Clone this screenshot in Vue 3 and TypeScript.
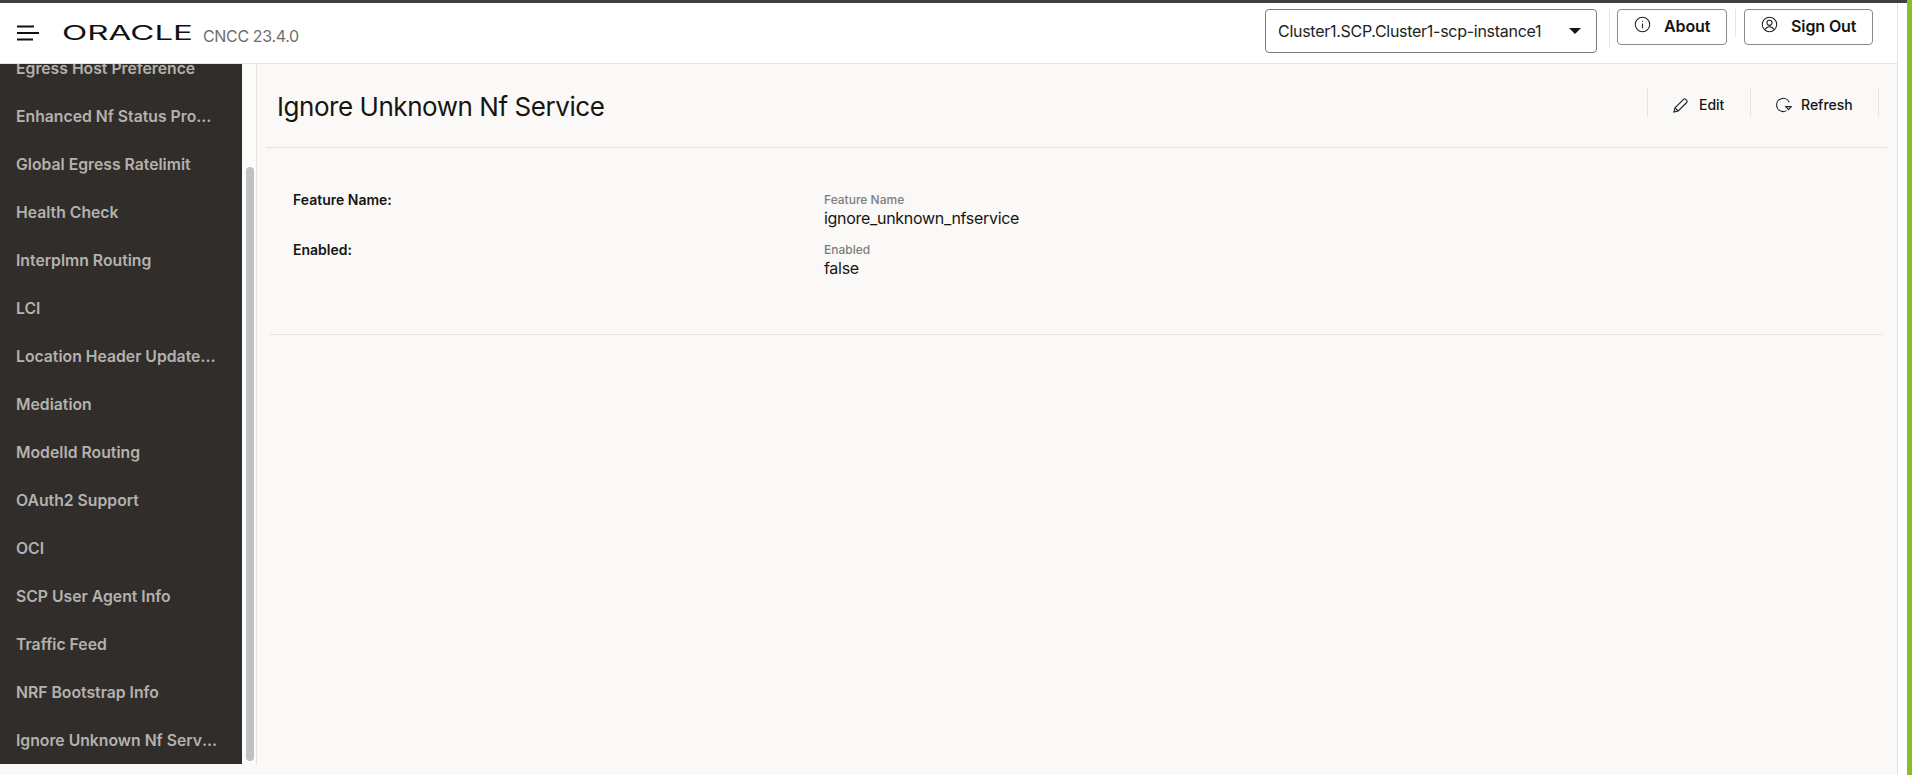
<template>
  <div class="screen">
    <div class="left-col">
      <div class="top-strip"></div>
      <div class="frame">
        <div class="app">
          <header class="app-header">
            <svg class="menu-icon" width="22" height="16" viewBox="0 0 22 16">
              <path d="M0 1.5h17M0 8h22M0 14.5h16" fill="none" stroke="#111" stroke-width="2" />
            </svg>
            <svg class="logo" width="132" height="24" viewBox="0 0 132 24">
              <text x="0" y="19" textLength="131" lengthAdjust="spacingAndGlyphs">ORACLE</text>
            </svg>
            <span class="version">CNCC 23.4.0</span>
            <div class="header-right">
              <div class="instance-select">
                <span>{{ instance }}</span>
                <span class="caret"></span>
              </div>
              <span class="header-sep tall"></span>
              <button class="outline-button about">
                <svg width="17" height="17" viewBox="0 0 16 16" fill="none" stroke="#222" stroke-width="1">
                  <circle cx="8" cy="8" r="6.8" />
                  <path d="M8 7v4.5M8 4.4v1.1" />
                </svg>
                About
              </button>
              <span class="header-sep"></span>
              <button class="outline-button signout">
                <svg width="17" height="17" viewBox="0 0 16 16" fill="none" stroke="#222" stroke-width="1">
                  <circle cx="8" cy="8" r="6.8" />
                  <circle cx="8" cy="6.4" r="2.4" />
                  <path d="M3.8 12.8c1-1.9 2.4-2.7 4.2-2.7s3.2.8 4.2 2.7" />
                </svg>
                Sign Out
              </button>
            </div>
          </header>

          <div class="app-body">
            <div class="side-wrap">
              <nav class="sidebar">
                <ul>
                  <li v-for="item in navItems" :key="item">
                    <span>{{ item }}</span>
                  </li>
                </ul>
              </nav>
              <div class="side-scroll"><div class="thumb"></div></div>
            </div>

            <main class="content">
              <div class="page-head">
                <h1>Ignore Unknown Nf Service</h1>
                <div class="toolbar">
                  <button class="tool-button edit">
                    <svg width="16" height="16" viewBox="0 0 16 16" fill="none" stroke="#222" stroke-width="1.1">
                      <path d="M1 15l1-4.2 8.5-8.5a1.6 1.6 0 0 1 2.2 0l1 1a1.6 1.6 0 0 1 0 2.2l-8.5 8.5z" />
                      <path d="M2 10.8l3.2 3.2" />
                    </svg>
                    Edit
                  </button>
                  <button class="tool-button refresh">
                    <svg width="17" height="16" viewBox="0 0 17 16" fill="none" stroke="#222" stroke-width="1.1">
                      <path d="M14.2 5.2A6.6 6.6 0 1 0 8 14.6c1.3 0 2.5-.4 3.5-1" />
                      <path d="M10.8 9.6h5.4l-2.7 3z" />
                    </svg>
                    Refresh
                  </button>
                </div>
              </div>

              <section class="details">
                <div v-for="field in fields" :key="field.label" class="field-row">
                  <div class="field-label">{{ field.label }}:</div>
                  <div>
                    <div class="field-caption">{{ field.label }}</div>
                    <div class="field-value">{{ field.value }}</div>
                  </div>
                </div>
              </section>
            </main>
          </div>
        </div>
        <div class="white-strip"></div>
      </div>
    </div>
    <div class="green-strip"></div>
  </div>
</template>

<script setup lang="ts">
const instance = "Cluster1.SCP.Cluster1-scp-instance1";

const navItems: string[] = [
  "Egress Host Preference",
  "Enhanced Nf Status Processing",
  "Global Egress Ratelimit",
  "Health Check",
  "Interplmn Routing",
  "LCI",
  "Location Header Update Config",
  "Mediation",
  "ModelId Routing",
  "OAuth2 Support",
  "OCI",
  "SCP User Agent Info",
  "Traffic Feed",
  "NRF Bootstrap Info",
  "Ignore Unknown Nf Service",
];

const fields = [
  { label: "Feature Name", value: "ignore_unknown_nfservice" },
  { label: "Enabled", value: "false" },
];
</script>

<style>
html,
body {
  margin: 0;
  overflow: hidden;
}
</style>

<style scoped>
.screen {
  display: flex;
  height: 775px;
  width: 1912px;
  font-family: Inter, "Liberation Sans", sans-serif;
  color: #161513;
  background: #fff;
}

.left-col {
  flex: 1;
  display: flex;
  flex-direction: column;
  min-width: 0;
}

.top-strip {
  height: 3px;
  background: #3f3f3d;
}

.green-strip {
  width: 5px;
  background: #8bbd27;
}

.frame {
  flex: 1;
  display: flex;
  min-height: 0;
}

.white-strip {
  width: 9px;
  background: #fff;
}

.app {
  flex: 1;
  display: flex;
  flex-direction: column;
  min-width: 0;
  border-right: 1px solid #e4e2df;
  background: #faf9f7;
}

.app-header {
  height: 60px;
  flex-shrink: 0;
  display: flex;
  align-items: flex-start;
  padding-left: 17px;
  background: #fff;
  border-bottom: 1px solid #e6e4e1;
}

.menu-icon {
  margin-top: 22px;
}

.logo {
  margin: 18px 0 0 23px;
  overflow: visible;
}

.logo text {
  font-family: Inter, "Liberation Sans", sans-serif;
  font-size: 19.5px;
  font-weight: 400;
  fill: #111;
}

.version {
  margin: 23px 0 0 9px;
  font-size: 16px;
  letter-spacing: -0.35px;
  line-height: 20px;
  color: #6f6e6c;
}

.header-right {
  margin-left: auto;
  padding: 6px 24px 0 0;
  display: flex;
  align-items: flex-start;
}

.instance-select {
  box-sizing: border-box;
  width: 332px;
  height: 44px;
  display: flex;
  align-items: center;
  justify-content: space-between;
  padding: 0 15px 0 12px;
  border: 1px solid #7d7c7a;
  border-radius: 4px;
  font-size: 16px;
  letter-spacing: -0.28px;
  color: #222;
}

.caret {
  width: 0;
  height: 0;
  border-left: 6px solid transparent;
  border-right: 6px solid transparent;
  border-top: 6px solid #161513;
}

.header-sep {
  width: 1px;
  height: 28px;
  margin: 0 8px;
  background: #e6e4e1;
}

.header-sep.tall {
  height: 39px;
  margin: 0 7px 0 12px;
}

.outline-button {
  box-sizing: border-box;
  height: 36px;
  display: flex;
  align-items: center;
  gap: 13px;
  border: 1px solid #8a8987;
  border-radius: 4px;
  background: #fff;
  font-family: inherit;
  font-size: 16px;
  font-weight: 600;
  letter-spacing: -0.1px;
  color: #161513;
}

.outline-button svg {
  margin-top: -3px;
}

.about {
  width: 110px;
  padding: 0 0 2px 16px;
}

.signout {
  width: 129px;
  padding: 0 0 2px 16px;
}

.app-body {
  flex: 1;
  display: flex;
  min-height: 0;
}

.side-wrap {
  display: flex;
  height: 700px;
}

.sidebar {
  width: 242px;
  background: #312d2a;
  overflow: hidden;
}

.sidebar ul {
  list-style: none;
  margin: -20px 0 0;
  padding: 0;
}

.sidebar li {
  height: 48px;
  display: flex;
  align-items: center;
  padding: 0 23px 0 16px;
  font-size: 15.75px;
  font-weight: 600;
  color: #b4b2af;
}

.sidebar li span {
  overflow: hidden;
  white-space: nowrap;
  text-overflow: ellipsis;
}

.side-scroll {
  box-sizing: border-box;
  width: 15px;
  padding: 103px 0 0 4px;
  border-right: 1px solid #e4e2df;
  background: #fbfbfa;
}

.thumb {
  width: 8px;
  height: 594px;
  border-radius: 4px;
  background: #c1c1c1;
}

.content {
  flex: 1;
  min-width: 0;
  padding: 0 10px 0 9px;
}

.page-head {
  height: 83px;
  display: flex;
  align-items: flex-start;
  justify-content: space-between;
  padding-left: 11px;
  border-bottom: 1px solid #e6e4e1;
}

.page-head h1 {
  margin: 25px 0 0;
  font-size: 26px;
  letter-spacing: -0.45px;
  line-height: 36px;
  font-weight: 400;
}

.toolbar {
  display: flex;
  margin: 24px 8px 0 0;
}

.tool-button {
  box-sizing: border-box;
  height: 29px;
  display: flex;
  align-items: center;
  gap: 10px;
  padding: 4px 0 0 25px;
  border: none;
  border-left: 1px solid #e6e4e1;
  background: none;
  font-family: inherit;
  font-size: 14px;
  font-weight: 500;
  color: #161513;
}

.edit {
  width: 103px;
}

.refresh {
  width: 129px;
  gap: 9px;
  padding-left: 24px;
  border-right: 1px solid #e6e4e1;
}

.details {
  margin: 0 4px 0 4px;
  padding: 44px 0 42px 23px;
  border-bottom: 1px solid #e6e4e1;
}

.field-row {
  display: grid;
  grid-template-columns: 531px 1fr;
  height: 50px;
}

.field-label {
  font-size: 14px;
  line-height: 16px;
  font-weight: 600;
}

.field-caption {
  font-size: 12px;
  line-height: 16px;
  font-weight: 500;
  color: #807e7a;
}

.field-value {
  font-size: 16px;
  letter-spacing: -0.3px;
  line-height: 20px;
  color: #161513;
}
</style>
